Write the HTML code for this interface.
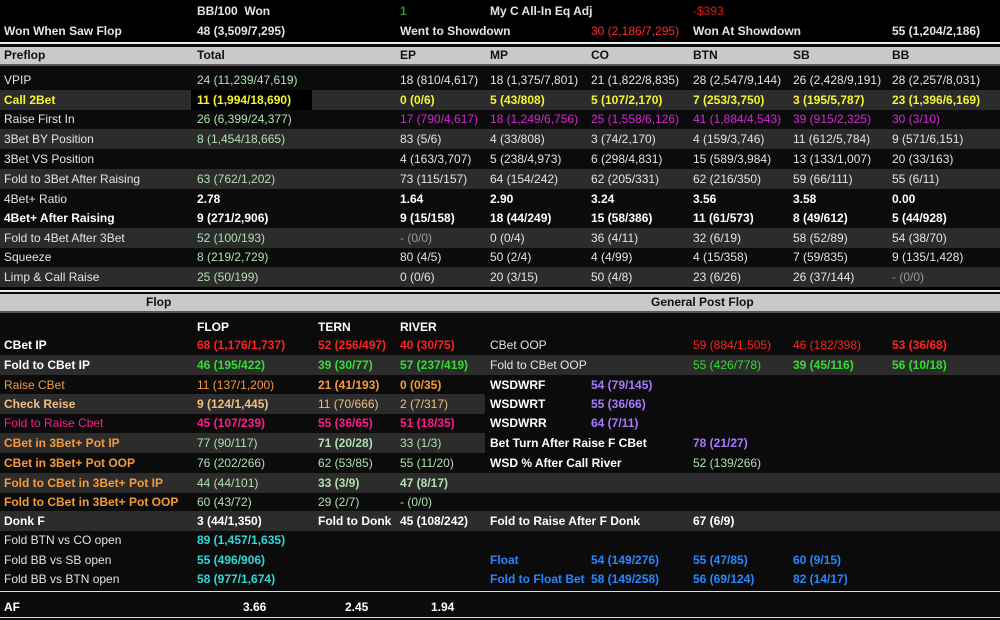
<!DOCTYPE html>
<html><head><meta charset="utf-8"><style>
*{margin:0;padding:0;box-sizing:border-box}
body{width:1000px;height:620px;background:#0b0b0b;font-family:"Liberation Sans","DejaVu Sans",sans-serif;font-size:12px;color:#e4e4e4;position:relative;overflow:hidden;letter-spacing:0}
.r{position:absolute;left:0;width:1000px;height:20px}
.r span{position:absolute;top:0;line-height:20px;white-space:nowrap}
.g{background:#2c2c2c}
.b{font-weight:bold}
.hl{position:absolute;height:2px;background:#e8e8e8;left:0;width:1000px}
.hd{position:absolute;left:0;width:1000px;height:17px;background:#c9c9c9;color:#111;font-weight:bold}
.hd span{position:absolute;line-height:17px}
.pg{color:#b0e0b0}.y{color:#f5f530;font-weight:bold}.m{color:#d428d4}.rd{color:#ff2222}.gr{color:#33dd33}
.o{color:#f59a3a}.t{color:#f0c080}.p{color:#ff1a8c}.c{color:#30d8d8}.pu{color:#a878ff}.bl{color:#2a86ff}.w{color:#fff}
</style></head><body>
<div style="position:absolute;left:0;top:0;width:1000px;height:42px;background:#000"></div>
<div class="r" style="top:1px"><span class="b" style="left:197px">BB/100&nbsp; Won</span><span class="b" style="left:400px;color:#2a9a2a">1</span><span class="b" style="left:490px">My C All-In Eq Adj</span><span style="left:693px;color:#dd1a1a">-$393</span></div>
<div class="r" style="top:21px"><span class="b" style="left:4px">Won When Saw Flop</span><span class="b" style="left:197px">48 (3,509/7,295)</span><span class="b" style="left:400px">Went to Showdown</span><span style="left:591px;color:#ff2a2a">30 (2,186/7,295)</span><span class="b" style="left:693px">Won At Showdown</span><span class="b" style="left:892px">55 (1,204/2,186)</span></div>
<div class="hl" style="top:42px"></div>
<div class="hd" style="top:47px"><span style="left:4px">Preflop</span><span style="left:197px">Total</span><span style="left:400px">EP</span><span style="left:490px">MP</span><span style="left:591px">CO</span><span style="left:693px">BTN</span><span style="left:793px">SB</span><span style="left:892px">BB</span></div>
<div style="position:absolute;top:64px;left:0;width:1000px;height:2px;background:#555"></div>

<div class="r" style="top:70px"><span style="left:4px">VPIP</span><span class="pg" style="left:197px">24 (11,239/47,619)</span><span style="left:400px">18 (810/4,617)</span><span style="left:490px">18 (1,375/7,801)</span><span style="left:591px">21 (1,822/8,835)</span><span style="left:693px">28 (2,547/9,144)</span><span style="left:793px">26 (2,428/9,191)</span><span style="left:892px">28 (2,257/8,031)</span></div>
<div class="r g" style="top:90px"><div style="position:absolute;left:191px;top:0;width:121px;height:20px;background:#000"></div><span class="y" style="left:4px">Call 2Bet</span><span class="y" style="left:197px">11 (1,994/18,690)</span><span class="y" style="left:400px">0 (0/6)</span><span class="y" style="left:490px">5 (43/808)</span><span class="y" style="left:591px">5 (107/2,170)</span><span class="y" style="left:693px">7 (253/3,750)</span><span class="y" style="left:793px">3 (195/5,787)</span><span class="y" style="left:892px">23 (1,396/6,169)</span></div>
<div class="r" style="top:109px"><span style="left:4px">Raise First In</span><span class="pg" style="left:197px">26 (6,399/24,377)</span><span class="m" style="left:400px">17 (790/4,617)</span><span class="m" style="left:490px">18 (1,249/6,756)</span><span class="m" style="left:591px">25 (1,558/6,126)</span><span class="m" style="left:693px">41 (1,884/4,543)</span><span class="m" style="left:793px">39 (915/2,325)</span><span class="m" style="left:892px">30 (3/10)</span></div>
<div class="r g" style="top:129px"><span style="left:4px">3Bet BY Position</span><span class="pg" style="left:197px">8 (1,454/18,665)</span><span style="left:400px">83 (5/6)</span><span style="left:490px">4 (33/808)</span><span style="left:591px">3 (74/2,170)</span><span style="left:693px">4 (159/3,746)</span><span style="left:793px">11 (612/5,784)</span><span style="left:892px">9 (571/6,151)</span></div>
<div class="r" style="top:149px"><span style="left:4px">3Bet VS Position</span><span style="left:400px">4 (163/3,707)</span><span style="left:490px">5 (238/4,973)</span><span style="left:591px">6 (298/4,831)</span><span style="left:693px">15 (589/3,984)</span><span style="left:793px">13 (133/1,007)</span><span style="left:892px">20 (33/163)</span></div>
<div class="r g" style="top:169px"><span style="left:4px">Fold to 3Bet After Raising</span><span class="pg" style="left:197px">63 (762/1,202)</span><span style="left:400px">73 (115/157)</span><span style="left:490px">64 (154/242)</span><span style="left:591px">62 (205/331)</span><span style="left:693px">62 (216/350)</span><span style="left:793px">59 (66/111)</span><span style="left:892px">55 (6/11)</span></div>
<div class="r" style="top:189px"><span style="left:4px">4Bet+ Ratio</span><span class="b w" style="left:197px">2.78</span><span class="b w" style="left:400px">1.64</span><span class="b w" style="left:490px">2.90</span><span class="b w" style="left:591px">3.24</span><span class="b w" style="left:693px">3.56</span><span class="b w" style="left:793px">3.58</span><span class="b w" style="left:892px">0.00</span></div>
<div class="r" style="top:208px"><span class="b w" style="left:4px">4Bet+ After Raising</span><span class="b w" style="left:197px">9 (271/2,906)</span><span class="b w" style="left:400px">9 (15/158)</span><span class="b w" style="left:490px">18 (44/249)</span><span class="b w" style="left:591px">15 (58/386)</span><span class="b w" style="left:693px">11 (61/573)</span><span class="b w" style="left:793px">8 (49/612)</span><span class="b w" style="left:892px">5 (44/928)</span></div>
<div class="r g" style="top:228px"><span style="left:4px">Fold to 4Bet After 3Bet</span><span class="pg" style="left:197px">52 (100/193)</span><span style="left:400px;color:#999">- (0/0)</span><span style="left:490px">0 (0/4)</span><span style="left:591px">36 (4/11)</span><span style="left:693px">32 (6/19)</span><span style="left:793px">58 (52/89)</span><span style="left:892px">54 (38/70)</span></div>
<div class="r" style="top:247px"><span style="left:4px">Squeeze</span><span class="pg" style="left:197px">8 (219/2,729)</span><span style="left:400px">80 (4/5)</span><span style="left:490px">50 (2/4)</span><span style="left:591px">4 (4/99)</span><span style="left:693px">4 (15/358)</span><span style="left:793px">7 (59/835)</span><span style="left:892px">9 (135/1,428)</span></div>
<div class="r g" style="top:267px"><span style="left:4px">Limp &amp; Call Raise</span><span class="pg" style="left:197px">25 (50/199)</span><span style="left:400px">0 (0/6)</span><span style="left:490px">20 (3/15)</span><span style="left:591px">50 (4/8)</span><span style="left:693px">23 (6/26)</span><span style="left:793px">26 (37/144)</span><span style="left:892px;color:#999">- (0/0)</span></div>
<div style="position:absolute;top:287px;left:0;width:1000px;height:3px;background:#000"></div>
<div class="hl" style="top:290px"></div>
<div class="hd" style="top:294px"><span style="left:146px">Flop</span><span style="left:651px">General Post Flop</span></div>
<div style="position:absolute;top:311px;left:0;width:1000px;height:2px;background:#555"></div>

<div class="r" style="top:317px;height:18px"><span class="b w" style="left:197px">FLOP</span><span class="b w" style="left:318px">TERN</span><span class="b w" style="left:400px">RIVER</span></div>
<div class="r" style="top:335px"><span class="b w" style="left:4px">CBet IP</span><span class="rd b" style="left:197px">68 (1,176/1,737)</span><span class="rd b" style="left:318px">52 (256/497)</span><span class="rd b" style="left:400px">40 (30/75)</span><span style="left:490px">CBet OOP</span><span class="rd" style="left:693px">59 (884/1,505)</span><span class="rd" style="left:793px">46 (182/398)</span><span class="rd b" style="left:892px">53 (36/68)</span></div>
<div class="r g" style="top:355px"><span class="b w" style="left:4px">Fold to CBet IP</span><span class="gr b" style="left:197px">46 (195/422)</span><span class="gr b" style="left:318px">39 (30/77)</span><span class="gr b" style="left:400px">57 (237/419)</span><span style="left:490px">Fold to CBet OOP</span><span class="gr" style="left:693px">55 (426/778)</span><span class="gr b" style="left:793px">39 (45/116)</span><span class="gr b" style="left:892px">56 (10/18)</span></div>
<div class="r" style="top:375px"><span class="o" style="left:4px">Raise CBet</span><span class="o" style="left:197px">11 (137/1,200)</span><span class="o b" style="left:318px">21 (41/193)</span><span class="o b" style="left:400px">0 (0/35)</span><span class="b w" style="left:490px">WSDWRF</span><span class="pu b" style="left:591px">54 (79/145)</span></div>
<div class="r" style="top:394px"><div style="position:absolute;left:0;width:485px;height:20px;background:#2c2c2c"></div><span class="t b" style="left:4px">Check Reise</span><span class="t b" style="left:197px">9 (124/1,445)</span><span class="t" style="left:318px">11 (70/666)</span><span class="t" style="left:400px">2 (7/317)</span><span class="b w" style="left:490px">WSDWRT</span><span class="pu b" style="left:591px">55 (36/66)</span></div>
<div class="r" style="top:413px"><span class="p" style="left:4px">Fold to Raise Cbet</span><span class="p b" style="left:197px">45 (107/239)</span><span class="p b" style="left:318px">55 (36/65)</span><span class="p b" style="left:400px">51 (18/35)</span><span class="b w" style="left:490px">WSDWRR</span><span class="pu b" style="left:591px">64 (7/11)</span></div>
<div class="r" style="top:433px"><div style="position:absolute;left:0;width:485px;height:20px;background:#2c2c2c"></div><span class="o b" style="left:4px">CBet in 3Bet+ Pot IP</span><span class="pg" style="left:197px">77 (90/117)</span><span class="pg b" style="left:318px">71 (20/28)</span><span class="pg" style="left:400px">33 (1/3)</span><span class="b w" style="left:490px">Bet Turn After Raise F CBet</span><span class="pu b" style="left:693px">78 (21/27)</span></div>
<div class="r" style="top:453px"><span class="o b" style="left:4px">CBet in 3Bet+ Pot OOP</span><span class="pg" style="left:197px">76 (202/266)</span><span class="pg" style="left:318px">62 (53/85)</span><span class="pg" style="left:400px">55 (11/20)</span><span class="b w" style="left:490px">WSD % After Call River</span><span class="pg" style="left:693px">52 (139/266)</span></div>
<div class="r g" style="top:473px"><span class="o b" style="left:4px">Fold to CBet in 3Bet+ Pot IP</span><span class="pg" style="left:197px">44 (44/101)</span><span class="pg b" style="left:318px">33 (3/9)</span><span class="pg b" style="left:400px">47 (8/17)</span></div>
<div class="r" style="top:492px"><span class="o b" style="left:4px">Fold to CBet in 3Bet+ Pot OOP</span><span class="pg" style="left:197px">60 (43/72)</span><span class="pg" style="left:318px">29 (2/7)</span><span class="pg" style="left:400px">- (0/0)</span></div>
<div class="r g" style="top:511px"><span class="b w" style="left:4px">Donk F</span><span class="b w" style="left:197px">3 (44/1,350)</span><span class="b w" style="left:318px">Fold to Donk</span><span class="b w" style="left:400px">45 (108/242)</span><span class="b w" style="left:490px">Fold to Raise After F Donk</span><span class="b w" style="left:693px">67 (6/9)</span></div>
<div class="r" style="top:530px"><span style="left:4px">Fold BTN vs CO open</span><span class="c b" style="left:197px">89 (1,457/1,635)</span></div>
<div class="r" style="top:550px"><span style="left:4px">Fold BB vs SB open</span><span class="c b" style="left:197px">55 (496/906)</span><span class="bl b" style="left:490px">Float</span><span class="bl b" style="left:591px">54 (149/276)</span><span class="bl b" style="left:693px">55 (47/85)</span><span class="bl b" style="left:793px">60 (9/15)</span></div>
<div class="r" style="top:569px"><span style="left:4px">Fold BB vs BTN open</span><span class="c b" style="left:197px">58 (977/1,674)</span><span class="bl b" style="left:490px">Fold to Float Bet</span><span class="bl b" style="left:591px">58 (149/258)</span><span class="bl b" style="left:693px">56 (69/124)</span><span class="bl b" style="left:793px">82 (14/17)</span></div>
<div style="position:absolute;top:591px;left:0;width:1000px;height:1px;background:#ddd"></div>
<div class="r" style="top:597px"><span class="b w" style="left:243px">3.66</span><span class="b w" style="left:345px">2.45</span><span class="b w" style="left:431px">1.94</span><span class="b w" style="left:4px">AF</span></div>
<div style="position:absolute;top:617px;left:0;width:1000px;height:1px;background:#ddd"></div>
</body></html>
